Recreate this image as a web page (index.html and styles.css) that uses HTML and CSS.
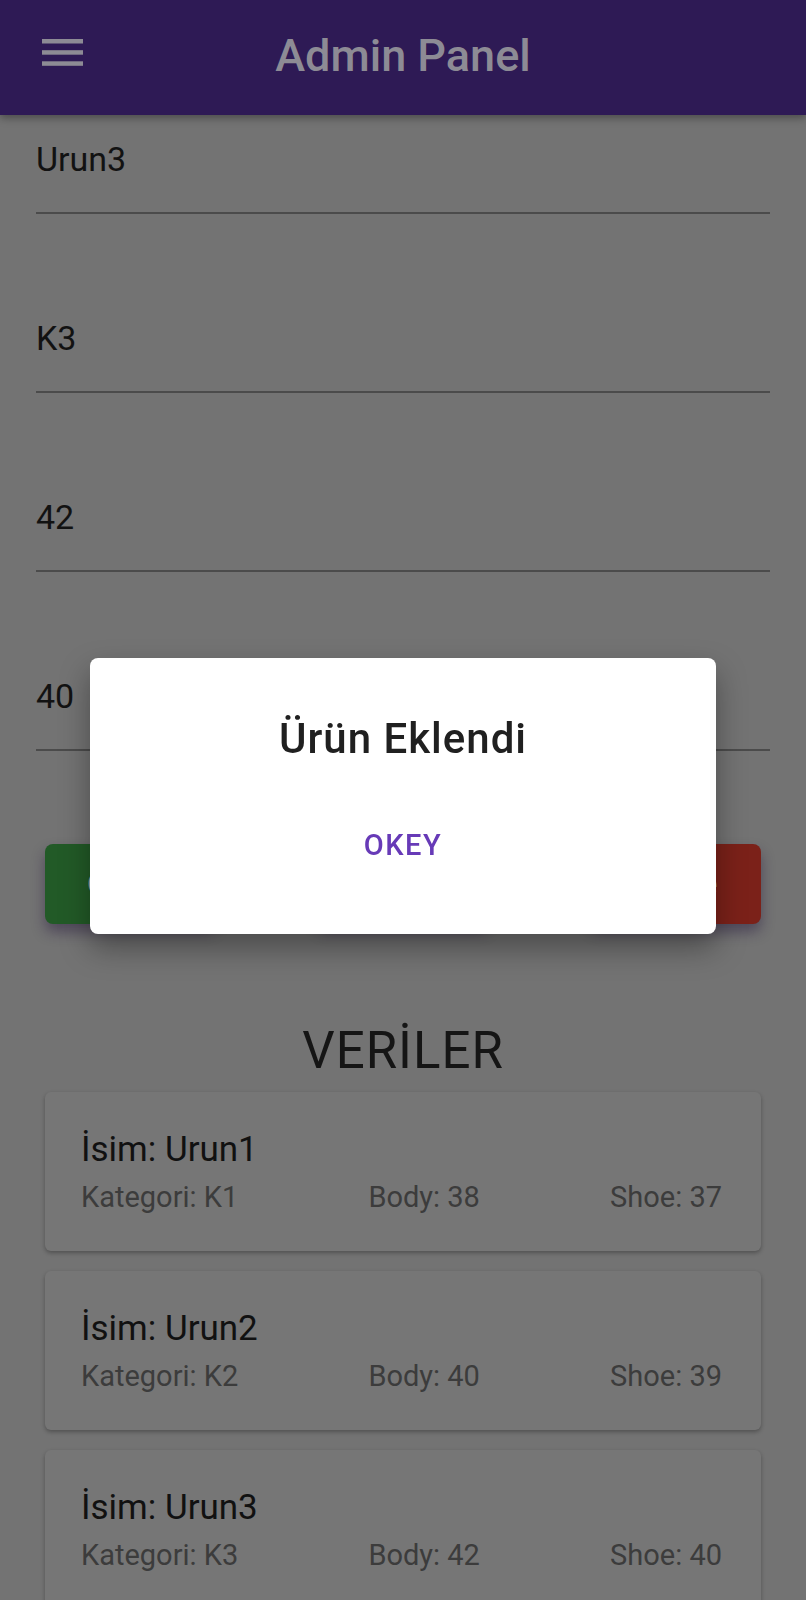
FILE: index.html
```html
<!DOCTYPE html>
<html lang="tr">
<head>
<meta charset="utf-8">
<title>Admin Panel</title>
<link rel="stylesheet" href="styles.css">
</head>
<body>
<header class="appbar">
  <div class="menu" aria-label="menu">
    <svg width="41" height="28" viewBox="0 0 41 28"><rect x="0" y="0" width="41" height="4.5" fill="#8d8b95"/><rect x="0" y="11.2" width="41" height="4.5" fill="#8d8b95"/><rect x="0" y="22.3" width="41" height="4.5" fill="#8d8b95"/></svg>
  </div>
  <h1 class="title">Admin Panel</h1>
  <div></div>
</header>

<main class="content">
  <div class="field">Urun3</div>
  <div class="field">K3</div>
  <div class="field">42</div>
  <div class="field">40</div>

  <div class="actions">
    <button class="btn btn-green">Create</button>
    <button class="btn btn-blue">Update</button>
    <button class="btn btn-red">Delete</button>
  </div>

  <h2 class="section">VERİLER</h2>

  <div class="card">
    <div class="card-title">İsim: Urun1</div>
    <div class="card-row"><span>Kategori: K1</span><span>Body: 38</span><span>Shoe: 37</span></div>
  </div>
  <div class="card">
    <div class="card-title">İsim: Urun2</div>
    <div class="card-row"><span>Kategori: K2</span><span>Body: 40</span><span>Shoe: 39</span></div>
  </div>
  <div class="card">
    <div class="card-title">İsim: Urun3</div>
    <div class="card-row"><span>Kategori: K3</span><span>Body: 42</span><span>Shoe: 40</span></div>
  </div>
</main>

<div class="overlay">
  <div class="dialog">
    <div class="dialog-title">Ürün Eklendi</div>
    <div class="dialog-action">OKEY</div>
  </div>
</div>
</body>
</html>
```
FILE: styles.css
```css
* { box-sizing: border-box; }
html, body {
  margin: 0;
  padding: 0;
  background: #737373;
  font-family: Roboto, "Liberation Sans", sans-serif;
  overflow: hidden;
  height: 1600px;
}
.appbar {
  position: relative;
  z-index: 2;
  height: 115px;
  background: #2e1a55;
  display: grid;
  grid-template-columns: 1fr auto 1fr;
  align-items: start;
  box-shadow: 0 3px 8px rgba(0, 0, 0, 0.35);
}
.menu {
  padding: 39px 0 0 42px;
  line-height: 0;
}
.title {
  margin: 0;
  padding-top: 29px;
  font-size: 45px;
  line-height: 53px;
  font-weight: 500;
  color: #8d8b95;
}
.content {
  padding: 0 36px;
}
.field {
  padding: 24px 0 33px;
  font-size: 34px;
  line-height: 40px;
  color: #121212;
  border-bottom: 2px solid #4b4b4b;
  margin-bottom: 80px;
}
.field:nth-child(4) { margin-bottom: 93px; }
.actions {
  display: flex;
  justify-content: space-between;
  padding: 0 9px;
}
.btn {
  width: 170px;
  height: 80px;
  border: none;
  border-radius: 8px;
  font-family: Roboto, "Liberation Sans", sans-serif;
  font-size: 29px;
  font-weight: 500;
  color: #a9a9a9;
  box-shadow: 0 8px 14px rgba(35, 20, 60, 0.45);
}
.btn-green { background: #225a27; }
.btn-blue { background: #1d4f7a; }
.btn-red { background: #7b2119; }
.section {
  margin: 97px 0 12px;
  text-align: center;
  font-size: 51px;
  line-height: 59px;
  font-weight: 400;
  letter-spacing: 1px;
  color: #151515;
}
.card {
  margin: 0 9px 20px;
  height: 159px;
  padding: 37px 39px 0 36px;
  background: #767676;
  border-radius: 6px;
  box-shadow: 0 2px 4px rgba(0, 0, 0, 0.3);
}
.card-title {
  font-size: 35px;
  line-height: 41px;
  color: #111;
}
.card-row {
  margin-top: 10px;
  display: flex;
  justify-content: space-between;
  font-size: 29px;
  line-height: 34px;
  color: #3c3c3c;
}
.overlay {
  position: fixed;
  inset: 0;
  z-index: 5;
  display: flex;
  align-items: center;
  justify-content: center;
  padding-bottom: 8px;
}
.dialog {
  width: 626px;
  height: 276px;
  background: #fff;
  border-radius: 8px;
  padding-top: 56px;
  text-align: center;
  box-shadow: 0 14px 30px rgba(0, 0, 0, 0.35);
}
.dialog-title {
  font-size: 42px;
  line-height: 49px;
  font-weight: 500;
  letter-spacing: 1px;
  color: #202020;
}
.dialog-action {
  margin-top: 65px;
  font-size: 29px;
  line-height: 34px;
  font-weight: 500;
  letter-spacing: 1.5px;
  color: #673ab7;
}
```
